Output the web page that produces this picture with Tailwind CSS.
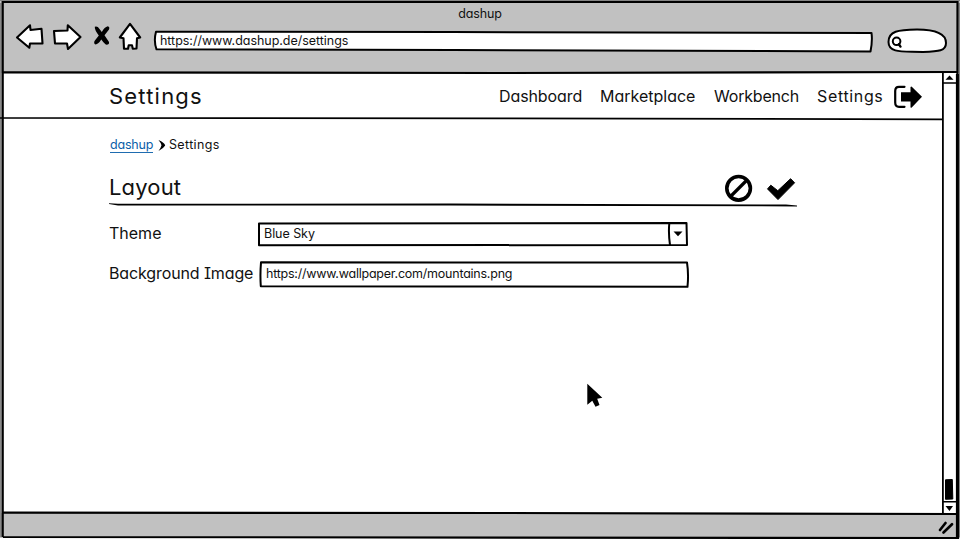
<!DOCTYPE html>
<html lang="en">
<head>
<meta charset="utf-8">
<title>dashup</title>
<script src="https://cdn.jsdelivr.net/npm/@tailwindcss/browser@4"></script>
</head>
<body class="bg-white">
<div class="relative flex h-[540px] w-[960px] flex-col overflow-hidden bg-white font-['Inter','Lato',sans-serif] text-[12.5px] leading-4 text-[#111] [font-feature-settings:'cv11','cv08']">

  <header class="flex h-[73px] shrink-0 flex-col bg-[#c1c1c1]">
    <div class="flex h-[22px] justify-center pt-[6px]"><span class="whitespace-nowrap tracking-[-0.15px]">dashup</span></div>
    <div class="flex h-[36px] items-start pl-[14px]">
      <svg class="shrink-0" width="132" height="32" viewBox="14 22 132 32" fill="#fff" stroke="#000" stroke-width="2.1" stroke-linejoin="round" stroke-linecap="round">
        <path d="M17 37.5 L30 25.3 L30.5 30 L41.5 28.8 L42.5 43.5 L30 43.5 L29.3 47.8 Z"/>
        <path d="M54 31 L67.5 30.5 L67.8 25.2 L80.5 37 L68 49 L67 43.5 L55 43.5 Z"/>
        <path d="M130 23.8 L119.8 37.5 L123.5 38.3 L124 48.8 L128 48.8 L128.7 45.2 L132 45.2 L132.8 48.8 L136.5 48.5 L137 38.2 L140.2 37.5 Z"/>
        <path d="M94.8 26.8 Q97.5 25.8 99.5 29 L101.8 32 Q104.5 27 107.8 26.2 Q110 26.8 109 29.5 L104.5 35.2 L109 42 Q109.5 44.8 106.5 44.8 Q104.5 44 101.3 39.5 Q98.5 44 95.5 44.5 Q93.5 43.5 94.5 41 L98.8 35.5 Q94.5 30 94.8 26.8 Z" fill="#000" stroke="none"/>
      </svg>
      <div class="relative ml-[6px] mt-[8px] flex h-[22px] w-[724px] items-center pl-[8px]">
        <svg class="absolute inset-0" width="724" height="24" fill="#fff" stroke="#000" stroke-width="2" stroke-linejoin="round"><path d="M4 1.8 L300 2 L719.5 3 Q720.6 11 718.5 21.5 L300 20 L4.5 19.3 Q1.5 11 4 1.8 Z"/></svg>
        <span class="relative whitespace-nowrap tracking-[-0.03px]">https://www.dashup.de/settings</span>
      </div>
      <svg class="ml-[10px] mt-[4px] shrink-0" width="64" height="30" viewBox="886 26 64 30" fill="#fff" stroke="#000" stroke-width="2" stroke-linecap="round">
        <path d="M888.5 42 C888.5 31 898 29.8 917 29.5 C936 29.5 946 34 946 43 C946 51 939 51.5 923 52 C905 51 888.5 54 888.5 42 Z"/>
        <circle cx="896.6" cy="41.3" r="3.8"/><path d="M898.8 44.2 L900.5 46.6" stroke-width="2.4"/>
      </svg>
    </div>
  </header>

  <div class="flex h-[440px] shrink-0">
    <main class="flex w-[942px] flex-col">
      <div class="flex h-[46px] items-center justify-between pl-[109px] pr-[19px]">
        <h1 class="whitespace-nowrap text-[22px] leading-7 tracking-[1.2px]">Settings</h1>
        <nav class="flex items-center text-[16px] leading-6">
          <a class="w-[101px] whitespace-nowrap tracking-[-0.1px]">Dashboard</a>
          <a class="w-[114px] whitespace-nowrap">Marketplace</a>
          <a class="w-[103px] whitespace-nowrap tracking-[-0.2px]">Workbench</a>
          <a class="w-[76px] whitespace-nowrap tracking-[0.65px]">Settings</a>
          <svg width="30" height="24" viewBox="893 84.5 30 24"><path d="M904.5 87.3 H899 Q895.2 87.3 895.2 91.5 V103 Q895.2 107.3 899 107.3 H904.5" fill="none" stroke="#000" stroke-width="2.2" stroke-linecap="round"/><path d="M901 92.8 H910.5 V87.5 L911.5 87 L922 97.3 L911.5 108.3 L910.5 108 V102 H901 Z"/></svg>
        </nav>
      </div>

      <div class="flex flex-col pl-[109px] pt-[18px]">
        <div class="flex h-[16px] items-center">
          <a class="ml-px w-[43px] whitespace-nowrap tracking-[-0.2px] text-[#0b5ea8] shadow-[0_-1px_0_#1f6cb0_inset]">dashup</a>
          <svg class="ml-[5px]" width="8" height="12" viewBox="158.5 139 8 12"><path d="M159 140 Q165 142.5 165.7 145.5 Q164 148.5 159 151 Q161.8 147 162 145.3 Q161.5 143 159 140Z"/></svg>
          <span class="ml-[3px] whitespace-nowrap tracking-[0.35px]">Settings</span>
        </div>

        <section class="mt-[15px] flex w-[688px] flex-col">
          <div class="flex h-[35px] items-center justify-between pt-[2px]">
            <h2 class="whitespace-nowrap text-[22px] leading-7 tracking-[0.15px]">Layout</h2>
            <svg class="shrink-0" width="76" height="32" viewBox="721 171 76 32"><circle cx="738.6" cy="188.3" r="11.8" fill="none" stroke="#000" stroke-width="3.6"/><path d="M730.5 196.5 L746.5 180.5" stroke="#000" stroke-width="3.2"/><path d="M767.5 188.9 L770.8 185.2 L777.8 190.7 L790.6 178.7 L794.6 182.8 L778 199.6 Z" stroke="#000" stroke-linejoin="round" stroke-width="1"/></svg>
          </div>
          <svg width="688" height="4" viewBox="109 203 688 4"><path d="M109 203.2 L118 203.8 L450 203.6 L786 204.6 L797 205.6 V206.4 L450 205.6 L118 205.4 L109 204 Z"/></svg>
        </section>

        <form class="flex flex-col text-[16px]">
          <div class="mt-[13px] flex h-[28px] items-center">
            <label class="relative -top-px w-[148px] whitespace-nowrap leading-6">Theme</label>
            <div class="relative flex h-[26px] w-[433px] items-center pl-[7px] text-[12.5px]">
              <svg class="absolute inset-0" width="433" height="28" viewBox="257 221 433 28"><path d="M259 223.4 L686.5 223 L687 245 L259 245.3 Z M669.3 223.5 Q668.3 233 670 245" fill="none" stroke="#000" stroke-width="2" stroke-linejoin="round"/><path d="M673.5 231.5 H682.5 L678 236.3 Z"/></svg>
              <span class="relative whitespace-nowrap tracking-[-0.05px]">Blue Sky</span>
            </div>
          </div>
          <div class="mt-[12px] flex h-[28px] items-center">
            <label class="relative -top-px w-[149px] whitespace-nowrap leading-6 tracking-[-0.12px]">Background Image</label>
            <div class="relative flex h-[28px] w-[433px] items-center pl-[8px] text-[12.5px]">
              <svg class="absolute inset-0" width="433" height="28" viewBox="258 260 433 28"><path d="M261 262.3 L450 262.5 L687 262.5 Q688.8 274 687.5 286.8 L450 286.4 L260.8 286.3 Q260 274 261 262.3 Z" fill="none" stroke="#000" stroke-width="2" stroke-linejoin="round"/></svg>
              <span class="relative whitespace-nowrap tracking-[-0.23px]">https://www.wallpaper.com/mountains.png</span>
            </div>
          </div>
        </form>
      </div>
    </main>
    <aside class="w-[16px]">
      <svg width="16" height="440" viewBox="942 73 16 440" stroke="#000" stroke-width="2" fill="#fff"><path d="M942.8 73 V513" /><path d="M942 83 H956 M942 501.8 H956" stroke-width="1.6"/><path d="M945.5 79.8 L949.5 75.5 L953.5 79.8 Z M945.5 506 L953 506 L949.5 511 Z" fill="#000" stroke="none"/><path d="M945.5 479.8 L952.3 479.5 L952.8 499 L945.5 499.3 Z" fill="#000" stroke-width="1" stroke-linejoin="round"/></svg>
    </aside>
  </div>

  <footer class="flex h-[25px] shrink-0 items-center justify-end bg-[#c1c1c1] pr-[5px]">
    <svg width="18" height="16" viewBox="937 517.5 18 16" stroke="#000" stroke-width="2.6" stroke-linecap="round"><path d="M940 529.5 L945.5 522.5 M943.5 532 L952 523.7"/></svg>
  </footer>

  <svg class="pointer-events-none absolute inset-0" width="960" height="540" fill="none" stroke="#000" stroke-width="2.2">
    <path d="M0 .5 H960" stroke="#858585" stroke-width="1"/>
    <path d="M.8 3 V537 M959.3 3 V537" stroke="#858585" stroke-width="1.5"/>
    <path d="M2.7 537 Q2 200 2.7 2 L957.5 2 Q957 270 958 538 Q500 537.5 3 537"/>
    <path d="M957.4 74 V538" stroke-width="3"/>
    <path d="M3 72.4 L500 73 L957 72" />
    <path d="M3 512.6 L500 513 L957 514" />
    <path d="M0 118 L500 118.4 L942 119.3" stroke-width="1.7"/>
    <path d="M587.3 383.8 L602.3 397.8 L597.2 398.7 L599.5 405 L595.5 406.7 L592.3 400.8 L587.3 404.8 Z" fill="#000" stroke="none"/>
  </svg>
</div>
</body>
</html>
